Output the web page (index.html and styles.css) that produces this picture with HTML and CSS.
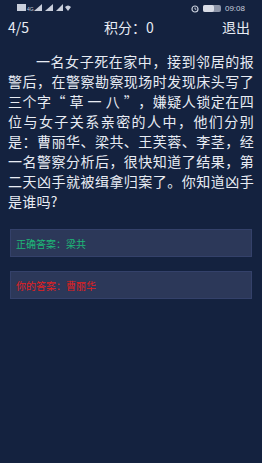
FILE: index.html
```html
<!DOCTYPE html>
<html lang="zh-CN">
    <head>
        <meta charset="UTF-8" />
        <meta name="viewport" content="width=device-width, initial-scale=1.0" />
        <title>推理题</title>
        <link rel="stylesheet" href="styles.css">
    </head>
    <body>
        <div class="statusBar">
            <div class="statusLeft">
                <svg width="54" height="9" viewBox="0 0 54 9">
                    <rect x="0" y="1" width="9" height="7" fill="#c9cfdc"/>
                    <text x="10" y="8" font-size="5" fill="#c9cfdc" font-family="Liberation Sans">4G</text>
                    <polygon points="17,8 25,8 25,1" fill="#c9cfdc"/>
                    <polygon points="28,8 36,8 36,1" fill="#c9cfdc"/>
                    <polygon points="39,8 46,8 46,1" fill="#c9cfdc"/>
                    <path d="M48 4 q3 -3 6 0 l-3 4 z" fill="#c9cfdc"/>
                </svg>
            </div>
            <div class="statusRight">
                <svg width="8" height="9" viewBox="0 0 8 9">
                    <circle cx="4" cy="5" r="3" fill="none" stroke="#c9cfdc" stroke-width="1.2"/>
                    <path d="M4 3.5 v1.7 h1.3" stroke="#c9cfdc" stroke-width="1" fill="none"/>
                </svg>
                <span class="battery"><span class="batteryFill"></span></span>
                <span>09:08</span>
            </div>
        </div>

        <div class="topBar">
            <span>4/5</span>
            <span class="score">积分：0</span>
            <span class="quit">退出</span>
        </div>

        <p class="question">一名女子死在家中，接到邻居的报警后，在警察勘察现场时发现床头写了三个字“ 草 一 八 ”，嫌疑人锁定在四位与女子关系亲密的人中，他们分别是：曹丽华、梁共、王芙蓉、李茎，经一名警察分析后，很快知道了结果，第二天凶手就被缉拿归案了。你知道凶手是谁吗?</p>

        <div class="answer right">正确答案：梁共</div>
        <div class="answer wrong">你的答案：曹丽华</div>
    </body>
</html>
```

FILE: styles.css
```css
body {
  margin: 0;
  background-color: #14223f;
  color: #e8ecf4;
  font-family: "Noto Sans CJK SC", "Noto Sans", sans-serif;
  height: 463px;
  overflow: hidden;
}

.statusBar {
  display: flex;
  justify-content: space-between;
  align-items: center;
  height: 16px;
  padding: 0 17px;
  font-family: "Liberation Sans", sans-serif;
  font-size: 8px;
  color: #c9cfdc;
}

.statusRight {
  display: flex;
  align-items: center;
  gap: 4px;
}

.battery {
  display: inline-block;
  width: 18px;
  height: 7px;
  border-radius: 2px;
  background: #8d95a8;
  position: relative;
}

.batteryFill {
  position: absolute;
  left: 0;
  top: 0;
  width: 11px;
  height: 7px;
  border-radius: 2px;
  background: #d8dce6;
}

.topBar {
  display: grid;
  grid-template-columns: 1fr auto 1fr;
  align-items: center;
  height: 22px;
  padding: 0 12px 0 8px;
  font-size: 14px;
}

.quit {
  justify-self: end;
}

.question {
  margin: 13px 0 0;
  padding: 0 8px;
  font-size: 14px;
  line-height: 20px;
  letter-spacing: 0.25px;
  text-indent: 2em;
  text-align: justify;
  text-spacing-trim: space-all;
}

.answer {
  margin: 0 10px;
  height: 26px;
  display: flex;
  align-items: center;
  padding: 0 5px;
  background: #2c3859;
  border: 1px solid #34416a;
  font-size: 10px;
}

.right {
  margin-top: 18px;
  color: #1db877;
}

.wrong {
  margin-top: 14px;
  color: #e3201f;
}
```
